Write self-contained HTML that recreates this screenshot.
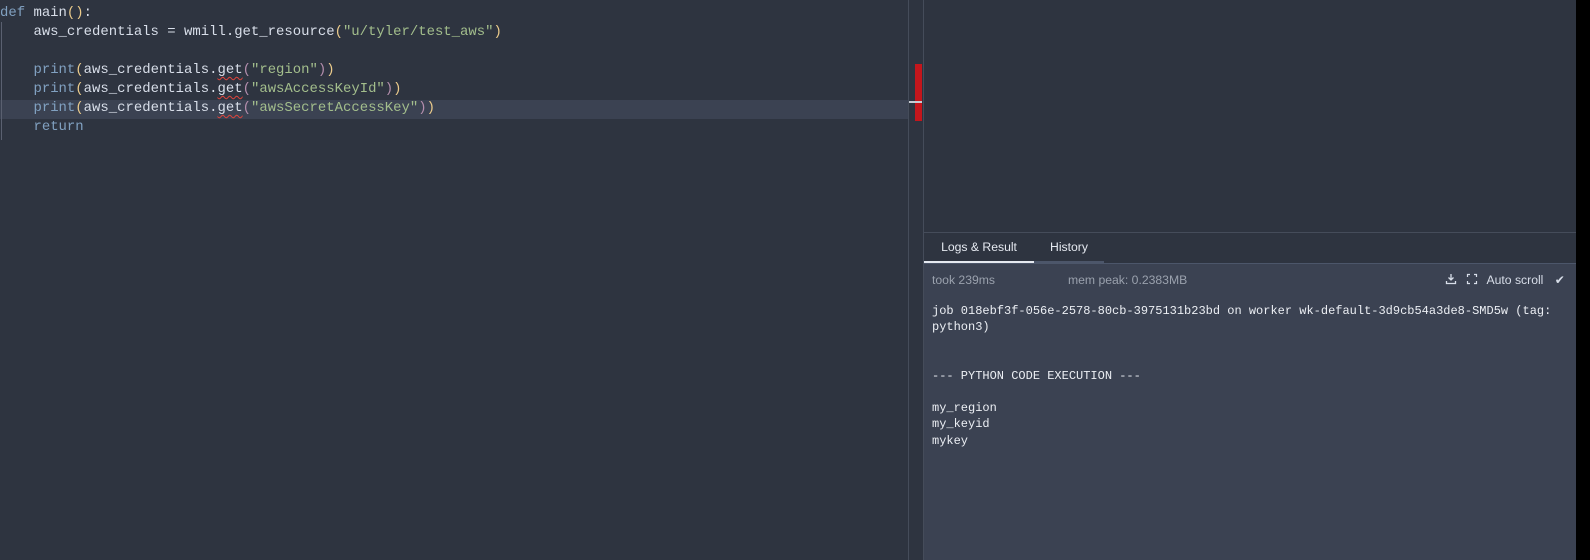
<!DOCTYPE html>
<html><head><style>
body{margin:0;width:1590px;height:560px;background:#000;position:relative;overflow:hidden;font-family:"Liberation Sans",sans-serif}
#ed{position:absolute;left:0;top:0;width:908px;height:560px;background:#2e3440}
#code{position:absolute;left:0;top:4px;font-family:"Liberation Mono",monospace;font-size:13.95px;line-height:19px;color:#d8dee9;white-space:pre}
.k{color:#81a1c1}.s{color:#a3be8c}.y{color:#ebcb8b}.p{color:#b48ead}
.sq{text-decoration:underline wavy #e0443c;text-underline-offset:3px;text-decoration-thickness:1px}
#hl{position:absolute;left:0;top:100px;width:908px;height:19px;background:#3b4252}
#gut{position:absolute;left:1px;top:22px;width:1px;height:118px;background:#5a6070}
#sep1{position:absolute;left:908px;top:0;width:1px;height:560px;background:#454c5a}
#gap{position:absolute;left:909px;top:0;width:14px;height:560px;background:#2e3440}
#sep2{position:absolute;left:923px;top:0;width:1px;height:560px;background:#454c5a}
#red{position:absolute;left:915px;top:64px;width:7px;height:57px;background:#c4161c}
#mk{position:absolute;left:909px;top:101px;width:13px;height:2px;background:#c8ccd4}
#rp{position:absolute;left:924px;top:0;width:652px;height:560px;background:#2e3440}
#tabs{position:absolute;left:924px;top:232px;width:652px;height:32px;background:#2e3440;border-top:1px solid #454c5a;border-bottom:1px solid #4c566a;box-sizing:border-box}
.tab{position:absolute;top:0;height:28px;line-height:28px;font-size:12.2px;color:#e5e9f0;text-align:center}
#log{position:absolute;left:924px;top:264px;width:652px;height:296px;background:#3b4252}
.meta{position:absolute;top:9px;font-size:12.2px;color:#9aa1ad}
#out{position:absolute;left:8px;top:39px;font-family:"Liberation Mono",monospace;font-size:12px;line-height:16.2px;color:#eceff4;white-space:pre}
</style></head><body>
<div id="ed"></div>
<div id="hl"></div>
<div id="gut"></div>
<div id="code"><span class="k">def</span> main<span class="y">()</span>:
    aws_credentials = wmill.get_resource<span class="y">(</span><span class="s">"u/tyler/test_aws"</span><span class="y">)</span>

    <span class="k">print</span><span class="y">(</span>aws_credentials.<span class="sq">get</span><span class="p">(</span><span class="s">"region"</span><span class="p">)</span><span class="y">)</span>
    <span class="k">print</span><span class="y">(</span>aws_credentials.<span class="sq">get</span><span class="p">(</span><span class="s">"awsAccessKeyId"</span><span class="p">)</span><span class="y">)</span>
    <span class="k">print</span><span class="y">(</span>aws_credentials.<span class="sq">get</span><span class="p">(</span><span class="s">"awsSecretAccessKey"</span><span class="p">)</span><span class="y">)</span>
    <span class="k">return</span></div>
<div id="sep1"></div><div id="gap"></div><div id="red"></div><div id="mk"></div><div id="sep2"></div>
<div id="rp"></div>
<div id="tabs">
<div class="tab" style="left:0;width:110px;border-bottom:2px solid #e5e9f0">Logs &amp; Result</div>
<div class="tab" style="left:110px;width:70px;border-bottom:2px solid #4c566a">History</div>
</div>
<div id="log">
<div class="meta" style="left:8px">took 239ms</div>
<div class="meta" style="left:144px">mem peak: 0.2383MB</div>
<div class="meta" style="right:11px;color:#d8dee9">
<svg width="12" height="12" viewBox="0 0 12 12" style="vertical-align:-1px" fill="none" stroke="#d8dee9" stroke-width="1.3"><path d="M6 1v6M3.5 4.5L6 7l2.5-2.5M1.5 8v2.5h9V8"/></svg>
<svg width="12" height="12" viewBox="0 0 12 12" style="vertical-align:-1px;margin-left:6px" fill="none" stroke="#d8dee9" stroke-width="1.2"><path d="M1.5 4V1.5H4M8 1.5h2.5V4M10.5 8v2.5H8M4 10.5H1.5V8"/></svg>
<span style="margin-left:5px">Auto scroll</span>
<span style="margin-left:8px">✔</span></div>
<div id="out">job 018ebf3f-056e-2578-80cb-3975131b23bd on worker wk-default-3d9cb54a3de8-SMD5w (tag:
python3)


--- PYTHON CODE EXECUTION ---

my_region
my_keyid
mykey</div>
</div>
</body></html>
